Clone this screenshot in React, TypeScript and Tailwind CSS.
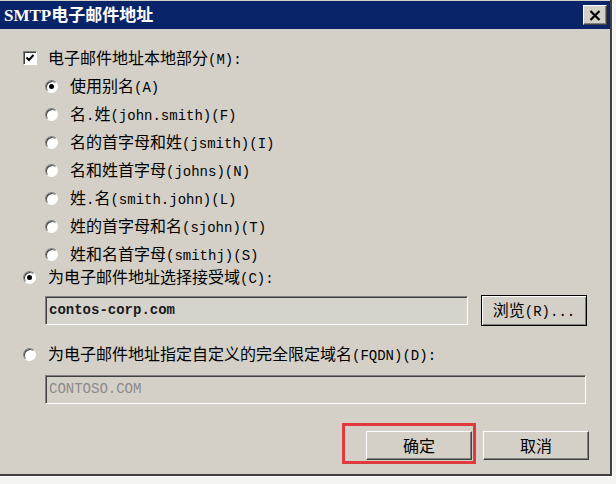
import React from "react";

const CJK = /([\u3000-\u9fff\uff00-\uffef]+)/;

function Label({ text, className = "" }: { text: string; className?: string }) {
  const parts = text.split(CJK).filter(Boolean);
  return (
    <span className={"whitespace-nowrap leading-[18px] text-black " + className}>
      {parts.map((p, i) =>
        CJK.test(p) ? (
          <span key={i} className="text-[16px] font-['Noto_Sans_CJK_SC',sans-serif]">
            {p}
          </span>
        ) : (
          <span key={i} className="text-[14px] font-['Liberation_Mono','Noto_Sans_CJK_SC',monospace]">
            {p}
          </span>
        )
      )}
    </span>
  );
}

function Radio({ checked = false }: { checked?: boolean }) {
  return (
    <span className="flex w-[13px] h-[13px] shrink-0 items-center justify-center rounded-full border border-t-[#808080] border-l-[#808080] border-r-white border-b-white bg-white shadow-[inset_1px_1px_0_#404040]">
      {checked && <span className="block w-[5px] h-[5px] rounded-full bg-black" />}
    </span>
  );
}

function Checkbox() {
  return (
    <span className="flex w-[14px] h-[14px] shrink-0 items-center justify-center border border-t-[#808080] border-l-[#808080] border-r-white border-b-white bg-white shadow-[inset_1px_1px_0_#404040]">
      <svg width="10" height="10" viewBox="0 0 10 10">
        <path d="M1.5 4.5 L4 7 L8.5 2" fill="none" stroke="#000" strokeWidth="2" />
      </svg>
    </span>
  );
}

const rows = [
  { t: "使用别名(A)", c: true },
  { t: "名.姓(john.smith)(F)" },
  { t: "名的首字母和姓(jsmith)(I)" },
  { t: "名和姓首字母(johns)(N)" },
  { t: "姓.名(smith.john)(L)" },
  { t: "姓的首字母和名(sjohn)(T)" },
  { t: "姓和名首字母(smithj)(S)" },
];

export default function App() {
  return (
    <div className="relative w-[616px] h-[484px] overflow-hidden bg-[#f4f4f2]">
      <div className="flex w-[612px] h-[476px] flex-col bg-[#d4d0c8] border-r-2 border-b-2 border-[#404040] shadow-[1px_1px_0_#ffffff]">
        {/* Title bar */}
        <div className="mt-[1px] flex h-[28px] items-center justify-between bg-[#0a246a] pl-[4px] pr-[3px]">
          <span className="whitespace-nowrap text-[17px] font-bold leading-none text-white font-['Liberation_Serif','Noto_Sans_CJK_SC',serif]">
            SMTP电子邮件地址
          </span>
          <span className="flex w-[24px] h-[20px] items-center justify-center bg-[#d4d0c8] border border-t-white border-l-white border-r-[#404040] border-b-[#404040] shadow-[inset_-1px_-1px_0_#808080]">
            <svg width="12" height="11" viewBox="0 0 12 11">
              <path d="M1.5 1 L10.5 10 M10.5 1 L1.5 10" stroke="#000" strokeWidth="2.2" />
            </svg>
          </span>
        </div>

        {/* Content */}
        <div className="flex flex-col pl-[23px] pt-[15px]">
          <div className="flex h-[28px] items-center gap-[11px]">
            <Checkbox />
            <Label text="电子邮件地址本地部分(M):" />
          </div>
          <div className="flex flex-col pl-[22px]">
            {rows.map((r, i) => (
              <div key={i} className="flex h-[28px] items-center gap-[12px]">
                <Radio checked={!!r.c} />
                <Label text={r.t} />
              </div>
            ))}
          </div>
          <div className="flex h-[18px] items-center gap-[12px]">
            <Radio checked />
            <Label text="为电子邮件地址选择接受域(C):" />
          </div>

          <div className="mt-[9px] flex h-[31px] items-center pl-[22px]">
            <div className="flex h-[29px] w-[423px] items-center border border-t-[#808080] border-l-[#808080] border-r-white border-b-white bg-[#d6d3cc] pl-[3px] shadow-[inset_1px_1px_0_#404040]">
              <span className="text-[14px] font-bold text-[#1a1a1a] font-['Liberation_Mono',monospace]">contos-corp.com</span>
            </div>
            <button className="ml-[13px] flex h-[31px] w-[106px] items-center justify-center border border-black bg-[#d4d0c8] shadow-[inset_1px_1px_0_#ffffff,inset_-1px_-1px_0_#808080]">
              <Label text="浏览(R)..." />
            </button>
          </div>

          <div className="mt-[19px] flex h-[18px] items-center gap-[12px]">
            <Radio />
            <Label text="为电子邮件地址指定自定义的完全限定域名(FQDN)(D):" />
          </div>

          <div className="mt-[12px] ml-[22px] flex h-[29px] w-[541px] items-center border border-t-[#808080] border-l-[#808080] border-r-white border-b-white bg-[#d4d0c8] pl-[3px] shadow-[inset_1px_1px_0_#404040]">
            <span className="text-[14px] text-[#8a8a8a] font-['Liberation_Mono',monospace]">CONTOSO.COM</span>
          </div>

          <div className="mt-[27px] flex justify-end gap-[11px] pr-[21px]">
            <button className="flex h-[29px] w-[106px] items-center justify-center border border-t-white border-l-white border-r-[#404040] border-b-[#404040] bg-[#d4d0c8] shadow-[inset_-1px_-1px_0_#808080]">
              <Label text="确定" />
            </button>
            <button className="flex h-[29px] w-[106px] items-center justify-center border border-t-white border-l-white border-r-[#404040] border-b-[#404040] bg-[#d4d0c8] shadow-[inset_-1px_-1px_0_#808080]">
              <Label text="取消" />
            </button>
          </div>
        </div>
      </div>

      {/* Red highlight annotation */}
      <div className="absolute left-[342px] top-[423px] h-[41px] w-[134px] border-[3px] border-[#e0393e]" />
    </div>
  );
}
